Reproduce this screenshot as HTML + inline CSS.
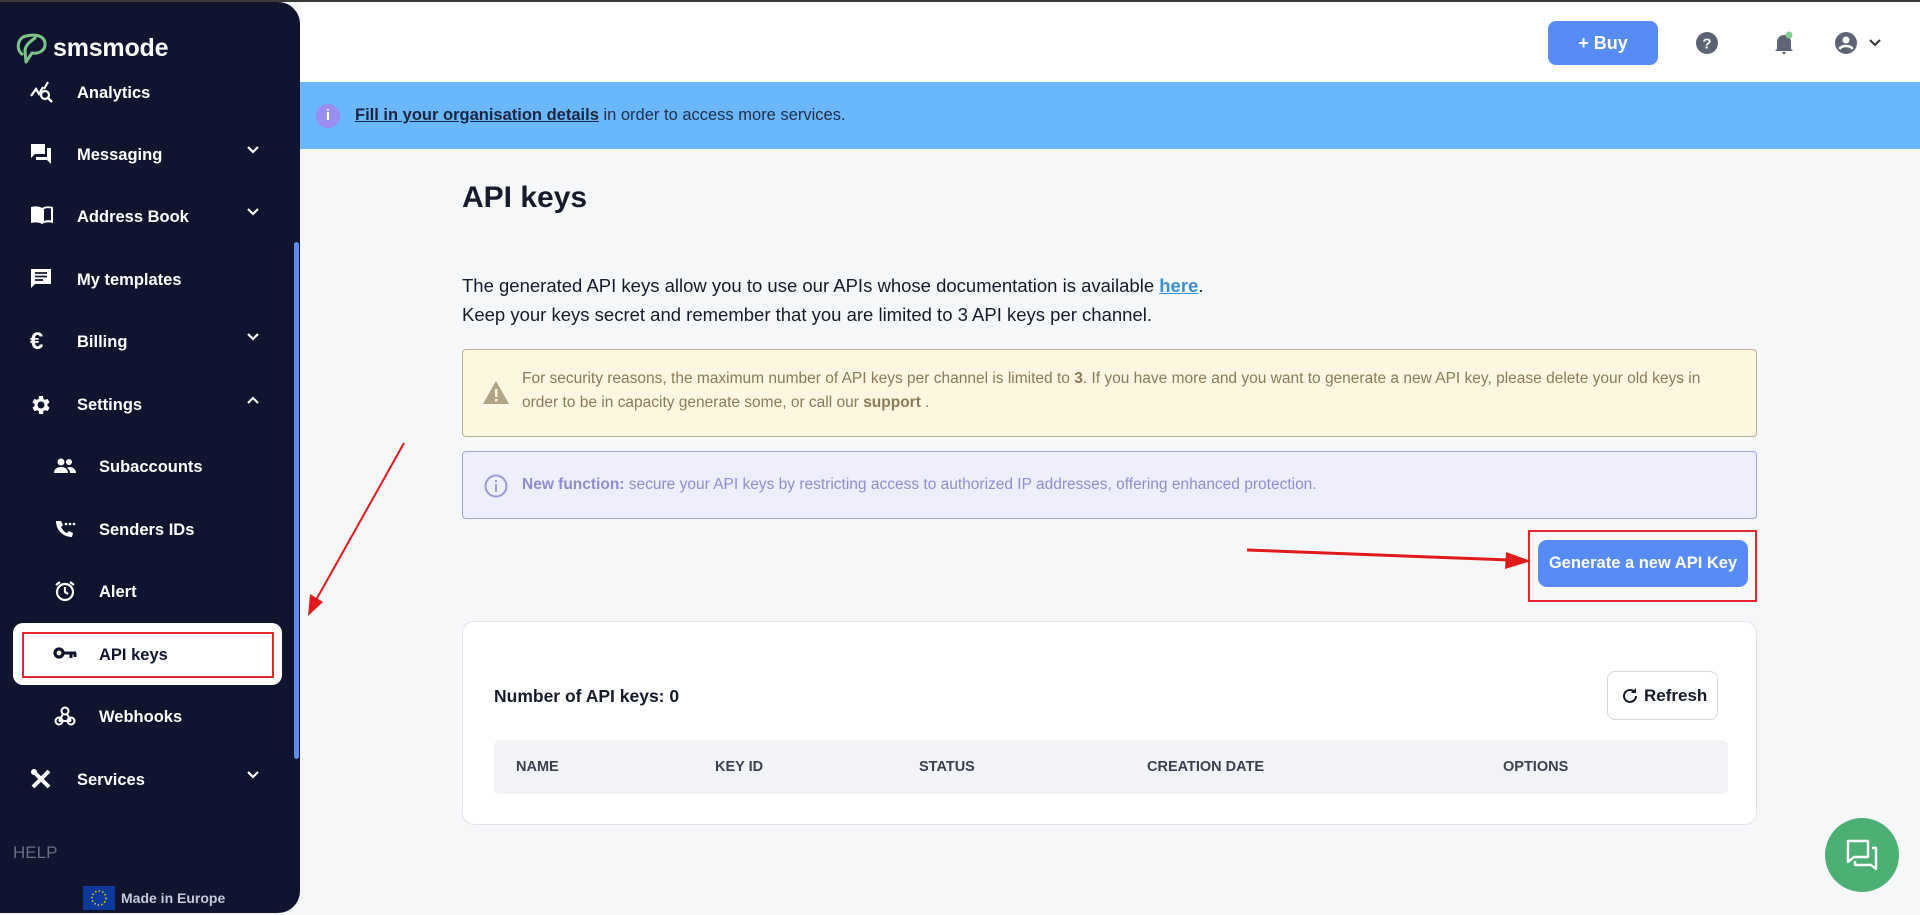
<!DOCTYPE html>
<html><head><meta charset="utf-8"><style>
*{box-sizing:border-box;margin:0;padding:0}
body{width:1920px;height:913px;overflow:hidden;background:#f6f7f9;font-family:"Liberation Sans",Arial,sans-serif;position:relative}
.abs{position:absolute}
#topline{left:0;top:0;width:1920px;height:2px;background:#3a3a3a}
#header{left:300px;top:2px;width:1620px;height:80px;background:#fff}
#banner{left:300px;top:82px;width:1620px;height:67px;background:#6ab7fb;color:#1f2d4a;font-size:17px}
#side{left:0;top:2px;width:300px;height:911px;background:#10142e;border-radius:0 22px 22px 0}
.nav{position:absolute;left:0;width:300px;color:#fff;font-weight:bold;font-size:16.5px;height:24px;line-height:24px;white-space:nowrap}
.nav svg{position:absolute;top:0}
.chev{position:absolute;left:246px;top:5px}
</style></head><body>
<div id="side" class="abs">
  <svg class="abs" style="left:14px;top:30px" width="36" height="34" viewBox="0 0 36 34"><path d="M8 22 C2 18 3 6 12 4 C20 2 30 3 31 11 C32 19 24 22 18 21 L12 30 L11 19 C11 13 17 9 21 6" fill="none" stroke="#7cc48a" stroke-width="3" stroke-linejoin="round" stroke-linecap="round"/></svg>
  <div class="abs" style="left:53px;top:32px;color:#fff;font-size:25px;font-weight:bold;letter-spacing:-0.2px">smsmode</div>

  <div class="nav" style="top:79px"><svg style="left:30px" width="24" height="22" viewBox="0 0 24 22"><path d="M1 15 L6 8 L9 13 L13 6 M14 8 L18 1" stroke="#fff" stroke-width="2.2" fill="none"/><circle cx="15" cy="14" r="4" stroke="#fff" stroke-width="2.2" fill="none"/><path d="M18 17 L22 21" stroke="#fff" stroke-width="2.4"/></svg><span style="position:absolute;left:77px">Analytics</span></div>

  <div class="nav" style="top:141px"><svg style="left:30px" width="22" height="22" viewBox="0 0 22 22"><path d="M1 1h14v10H5l-4 4z" fill="#fff"/><path d="M17 5h4v16l-4-4H6v-3h11z" fill="#fff"/></svg><span style="position:absolute;left:77px">Messaging</span><svg class="chev" width="14" height="14" viewBox="0 0 14 14"><path d="M2 4l5 5 5-5" stroke="#fff" stroke-width="2.2" fill="none"/></svg></div>

  <div class="nav" style="top:203px"><svg style="left:30px" width="24" height="20" viewBox="0 0 24 20"><path d="M1 2c4-1 8-1 11 1 3-2 7-2 11-1v16c-4-1-8-1-11 1-3-2-7-2-11-1z" fill="#fff"/><path d="M12 4v13M14 4c2-1 5-1 7-.5v12c-2-.5-5-.5-7 .5z" fill="#10142e"/></svg><span style="position:absolute;left:77px">Address Book</span><svg class="chev" width="14" height="14" viewBox="0 0 14 14"><path d="M2 4l5 5 5-5" stroke="#fff" stroke-width="2.2" fill="none"/></svg></div>

  <div class="nav" style="top:266px"><svg style="left:30px" width="22" height="22" viewBox="0 0 22 22"><path d="M1 1h20v15H5l-4 4z" fill="#fff"/><path d="M5 5h12M5 8.5h12M5 12h8" stroke="#10142e" stroke-width="1.8"/></svg><span style="position:absolute;left:77px">My templates</span></div>

  <div class="nav" style="top:328px"><span style="position:absolute;left:30px;font-size:24px;top:0">€</span><span style="position:absolute;left:77px">Billing</span><svg class="chev" width="14" height="14" viewBox="0 0 14 14"><path d="M2 4l5 5 5-5" stroke="#fff" stroke-width="2.2" fill="none"/></svg></div>

  <div class="nav" style="top:391px"><svg style="left:29px" width="24" height="24" viewBox="0 0 24 24"><path fill="#fff" d="M19.4 13a7.5 7.5 0 0 0 0-2l2.1-1.6-2-3.5-2.5 1a7 7 0 0 0-1.7-1L15 3h-4l-.4 2.9a7 7 0 0 0-1.7 1l-2.5-1-2 3.5L6.6 11a7.5 7.5 0 0 0 0 2l-2.1 1.6 2 3.5 2.5-1a7 7 0 0 0 1.7 1L11 21h4l.4-2.9a7 7 0 0 0 1.7-1l2.5 1 2-3.5zM13 15.5a3.5 3.5 0 1 1 0-7 3.5 3.5 0 0 1 0 7z" transform="translate(-1 0)"/></svg><span style="position:absolute;left:77px">Settings</span><svg class="chev" width="14" height="14" viewBox="0 0 14 14"><path d="M2 10l5-5 5 5" stroke="#fff" stroke-width="2.2" fill="none"/></svg></div>

  <div class="nav" style="top:453px"><svg style="left:54px;top:3px" width="22" height="16" viewBox="0 0 22 16"><circle cx="7" cy="4" r="3.5" fill="#fff"/><circle cx="15" cy="4" r="3" fill="#fff"/><path d="M0 15c0-4 3-6 7-6s7 2 7 6zM15 9c4 0 7 2 7 6h-6c0-2-1-4-3-5z" fill="#fff"/></svg><span style="position:absolute;left:99px">Subaccounts</span></div>

  <div class="nav" style="top:516px"><svg style="left:54px" width="22" height="22" viewBox="0 0 22 22"><path d="M2 3c0 9 7 16 16 16l1-4-4-2-2 2c-3-1-5-4-6-6l2-2-2-4z" fill="#fff"/><circle cx="12" cy="6" r="1.3" fill="#fff"/><circle cx="16" cy="6" r="1.3" fill="#fff"/><circle cx="20" cy="6" r="1.3" fill="#fff"/></svg><span style="position:absolute;left:99px">Senders IDs</span></div>

  <div class="nav" style="top:578px"><svg style="left:54px" width="22" height="22" viewBox="0 0 22 22"><circle cx="11" cy="12" r="8" stroke="#fff" stroke-width="2.2" fill="none"/><path d="M11 7v5l3 2M2 5l4-3M20 5l-4-3" stroke="#fff" stroke-width="2.2" fill="none"/></svg><span style="position:absolute;left:99px">Alert</span></div>

  <div class="abs" style="left:13px;top:621px;width:269px;height:62px;background:#fff;border-radius:10px"></div>
  <div class="abs" style="left:22px;top:630px;width:252px;height:46px;border:2px solid #e2262b"></div>
  <div class="nav" style="top:641px;color:#10142e"><svg style="left:53px;top:4px" width="24" height="14" viewBox="0 0 24 14"><circle cx="6" cy="6" r="4" stroke="#10142e" stroke-width="3.2" fill="none"/><path d="M10 6h13M18 6v5M22 6v4" stroke="#10142e" stroke-width="3"/></svg><span style="position:absolute;left:99px">API keys</span></div>

  <div class="nav" style="top:703px"><svg style="left:54px" width="22" height="22" viewBox="0 0 22 22"><circle cx="11" cy="6" r="3.5" stroke="#fff" stroke-width="2" fill="none"/><circle cx="5" cy="16" r="3.5" stroke="#fff" stroke-width="2" fill="none"/><circle cx="17" cy="16" r="3.5" stroke="#fff" stroke-width="2" fill="none"/><path d="M9 9l-4 7M13 9l4 7M5 16h12" stroke="#fff" stroke-width="2" fill="none"/></svg><span style="position:absolute;left:99px">Webhooks</span></div>

  <div class="nav" style="top:766px"><svg style="left:30px" width="22" height="22" viewBox="0 0 22 22"><path d="M3 3l16 16M19 3L3 19" stroke="#fff" stroke-width="4"/><circle cx="4" cy="4" r="3" fill="#fff"/></svg><span style="position:absolute;left:77px">Services</span><svg class="chev" width="14" height="14" viewBox="0 0 14 14"><path d="M2 4l5 5 5-5" stroke="#fff" stroke-width="2.2" fill="none"/></svg></div>

  <div class="abs" style="left:13px;top:841px;color:#6a6f82;font-size:17px">HELP</div>
  <div class="abs" style="left:83px;top:884px;width:32px;height:24px;background:#0d3a9a"><svg width="32" height="24"><circle cx="16" cy="12" r="7" stroke="#f5d000" stroke-width="1.6" stroke-dasharray="1.4 2.2" fill="none"/></svg></div>
  <div class="abs" style="left:121px;top:888px;color:#c6cadd;font-size:14px;font-weight:bold">Made in Europe</div>
  <div class="abs" style="left:294px;top:240px;width:5px;height:517px;background:#5b8def;border-radius:3px"></div>
</div>
<div id="topline" class="abs"></div>

<div id="header" class="abs">
  <div class="abs" style="left:1248px;top:19px;width:110px;height:44px;background:#578cf7;border-radius:8px;color:#fff;font-weight:bold;font-size:18px;text-align:center;line-height:44px">+ Buy</div>
  <svg class="abs" style="left:1396px;top:30px" width="22" height="22" viewBox="0 0 22 22"><circle cx="11" cy="11" r="11" fill="#5c6375"/><text x="11" y="16.5" text-anchor="middle" fill="#fff" font-size="15" font-weight="bold" font-family="Liberation Sans">?</text></svg>
  <svg class="abs" style="left:1472px;top:28px" width="24" height="26" viewBox="0 0 24 26"><path d="M5 19V12a7 7 0 0 1 14 0v7l2 2H3z" fill="#5c6375"/><path d="M10 22h4l-2 3z" fill="#5c6375"/><circle cx="17" cy="5" r="3.5" fill="#7fd08e"/></svg>
  <svg class="abs" style="left:1535px;top:30px" width="22" height="22" viewBox="0 0 22 22"><circle cx="11" cy="11" r="11" fill="#5c6375"/><circle cx="11" cy="8" r="3.5" fill="#fff"/><path d="M4.5 17c2-4 11-4 13 0" stroke="#fff" stroke-width="2.6" fill="none"/></svg>
  <svg class="abs" style="left:1568px;top:36px" width="14" height="10" viewBox="0 0 14 10"><path d="M2 2l5 5 5-5" stroke="#333" stroke-width="2" fill="none"/></svg>
</div>

<div id="banner" class="abs">
  <div class="abs" style="left:16px;top:22px;width:24px;height:24px;border-radius:50%;background:#9a8ef0;color:#fff;font-size:15px;text-align:center;line-height:24px;font-weight:bold">i</div>
  <div class="abs" style="left:55px;top:24px;font-size:16.5px"><u style="font-weight:bold;color:#1b2540">Fill in your organisation details</u> in order to access more services.</div>
</div>

<div class="abs" style="left:462px;top:181px;font-size:30px;color:#161b2c;font-weight:bold;-webkit-text-stroke:0">API keys</div>
<div class="abs" style="left:462px;top:271px;font-size:18.5px;color:#161b2c;line-height:29px">The generated API keys allow you to use our APIs whose documentation is available <u style="color:#3b8fd3;font-weight:bold">here</u>.<br>Keep your keys secret and remember that you are limited to 3 API keys per channel.</div>

<div class="abs" style="left:462px;top:349px;width:1295px;height:88px;background:#fdf6e0;border:1px solid #b9ae8e;border-radius:4px">
  <svg class="abs" style="left:20px;top:31px" width="26" height="23" viewBox="0 0 26 23"><path d="M13 0L26 23H0z" fill="#b3a583"/><rect x="12" y="8" width="2.4" height="8" fill="#fdf6e0"/><rect x="12" y="18" width="2.4" height="2.4" fill="#fdf6e0"/></svg>
  <div class="abs" style="left:59px;top:17px;width:1200px;font-size:15.5px;line-height:24px;color:#8c7b55">For security reasons, the maximum number of API keys per channel is limited to <b>3</b>. If you have more and you want to generate a new API key, please delete your old keys in order to be in capacity generate some, or call our <b>support</b> .</div>
</div>

<div class="abs" style="left:462px;top:451px;width:1295px;height:68px;background:#efeefd;border:1px solid #a3a2d8;border-radius:4px">
  <svg class="abs" style="left:21px;top:22px" width="24" height="24" viewBox="0 0 24 24"><circle cx="12" cy="12" r="10.5" stroke="#9a98d8" stroke-width="2" fill="none"/><rect x="11" y="10" width="2" height="8" fill="#9a98d8"/><rect x="11" y="6" width="2" height="2.2" fill="#9a98d8"/></svg>
  <div class="abs" style="left:59px;top:24px;font-size:15.5px;color:#8f8dd2"><b>New function:</b> secure your API keys by restricting access to authorized IP addresses, offering enhanced protection.</div>
</div>

<div class="abs" style="left:1528px;top:530px;width:229px;height:72px;border:2px solid #e2262b"></div>
<div class="abs" style="left:1538px;top:540px;width:210px;height:47px;background:#578cf7;border-radius:9px;color:#fff;font-size:16.5px;font-weight:bold;text-align:center;line-height:47px;white-space:nowrap">Generate a new API Key</div>

<svg class="abs" style="left:0;top:0" width="1920" height="913">
  <line x1="1247" y1="550" x2="1510" y2="560" stroke="#e11b1b" stroke-width="3"/>
  <path d="M1531 561 L1506 552 L1505 569 Z" fill="#e11b1b"/>
  <line x1="404" y1="443" x2="316" y2="600" stroke="#e11b1b" stroke-width="2"/>
  <path d="M308 616 L310 594 L323 602 Z" fill="#e11b1b"/>
</svg>

<div class="abs" style="left:462px;top:621px;width:1295px;height:204px;background:#fff;border:1px solid #e3e5ea;border-radius:12px">
  <div class="abs" style="left:31px;top:64px;font-size:17.5px;font-weight:bold;color:#161b2c">Number of API keys: 0</div>
  <div class="abs" style="left:1144px;top:49px;width:111px;height:49px;border:1px solid #d5d8de;border-radius:8px;font-size:17px;font-weight:bold;color:#161b2c;line-height:47px;padding-left:36px;white-space:nowrap">Refresh
    <svg class="abs" style="left:13px;top:15px" width="18" height="18" viewBox="0 0 18 18"><path d="M15 9a6 6 0 1 1-2-4.5" stroke="#161b2c" stroke-width="2" fill="none"/><path d="M15 1v5h-5z" fill="#161b2c"/></svg>
  </div>
  <div class="abs" style="left:31px;top:118px;width:1234px;height:54px;background:#f1f3f6;border-radius:6px;font-size:14.5px;font-weight:bold;color:#3a4050;line-height:54px">
    <span class="abs" style="left:22px">NAME</span><span class="abs" style="left:221px">KEY ID</span><span class="abs" style="left:425px">STATUS</span><span class="abs" style="left:653px">CREATION DATE</span><span class="abs" style="left:1009px">OPTIONS</span>
  </div>
</div>

<div class="abs" style="left:1825px;top:818px;width:74px;height:74px;border-radius:50%;background:#4caf73">
  <svg class="abs" style="left:20px;top:20px" width="34" height="34" viewBox="0 0 34 34"><path d="M3 3h20v16H9l-6 5z" stroke="#fff" stroke-width="2.4" fill="none" stroke-linejoin="round"/><path d="M10 23v4h16l5 4V10h-4" stroke="#fff" stroke-width="2.4" fill="none" stroke-linejoin="round"/></svg>
</div>
</body></html>
